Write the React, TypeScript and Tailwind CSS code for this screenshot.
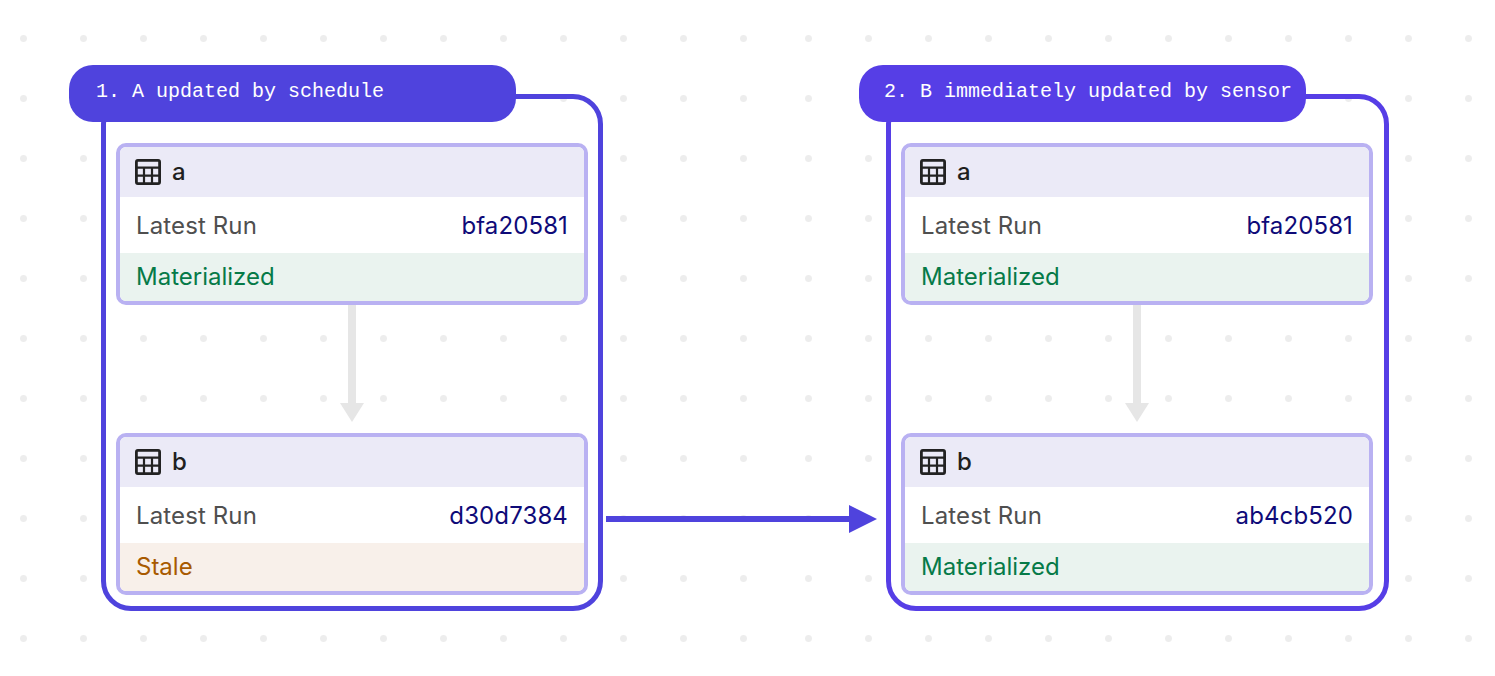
import React from 'react';

const TableIcon = () => (
  <svg width="26" height="26" viewBox="0 0 26 26" fill="none" stroke="#222222" strokeWidth="2.2" className="shrink-0">
    <rect x="1.4" y="1.4" width="23.2" height="23.2" rx="1.5" strokeWidth="2.8" />
    <path d="M1 8.6H25M1 16.6H25M9 8.6V25M17 8.6V25" />
  </svg>
);

interface AssetCardProps {
  name: string;
  run: string;
  stale?: boolean;
}

const AssetCard: React.FC<AssetCardProps> = ({ name, run, stale }) => (
  <div className="h-[162px] border-4 border-[#b9b1f2] rounded-[10px] overflow-hidden flex flex-col font-['Inter',sans-serif] text-[24px] bg-white">
    <div className="h-[50px] bg-[#ebeaf7] flex items-center pl-[15px] gap-[11px] font-medium text-[#1f1f1f]">
      <TableIcon />
      <span>{name}</span>
    </div>
    <div className="h-[56px] pt-px flex items-center justify-between px-4 tracking-[0.005em] text-[#4f4f4f]">
      <span>Latest Run</span>
      <span className="text-[#0e0a78]">{run}</span>
    </div>
    <div className={`flex-1 flex items-center pl-4 ${stale ? 'bg-[#f8f0ea] text-[#a85a00]' : 'bg-[#eaf3ef] text-[#067a48]'}`}>
      {stale ? 'Stale' : 'Materialized'}
    </div>
  </div>
);

const DownArrow = () => (
  <div className="h-[128px] flex justify-center">
    <svg width="24" height="117" viewBox="0 0 24 117">
      <path d="M8 0H16V98H24L12 117L0 98H8Z" fill="#e6e6e6" />
    </svg>
  </div>
);

interface StepPanelProps {
  label: string;
  widthClass: string;
  frameClass: string;
  pillClass: string;
  children: React.ReactNode;
}

const StepPanel: React.FC<StepPanelProps> = ({ label, widthClass, frameClass, pillClass, children }) => (
  <div className={`${widthClass} shrink-0 h-[676px] pt-[94px] pl-[101px] bg-[radial-gradient(circle_at_23.5px_38.5px,#ededed_3px,transparent_4px)] bg-[size:60px_60px]`}>
    <div className={`relative h-[517px] border-[5px] rounded-[30px] ${frameClass}`}>
      <div className={`absolute top-[-34.5px] h-[57.5px] pb-[3px] rounded-[24px] flex items-center font-['Liberation_Mono',monospace] text-[20px] text-white whitespace-pre ${pillClass}`}>
        {label}
      </div>
      <div className="absolute top-[44px] left-[10px] w-[472px]">{children}</div>
    </div>
  </div>
);

export default function App() {
  return (
    <div className="relative w-[1495px] h-[676px] bg-white overflow-hidden flex">
      <StepPanel
        label="1. A updated by schedule"
        widthClass="w-[785px] pr-[182px]"
        frameClass="border-[#4f43dd]"
        pillClass="left-[-37.5px] w-[447.5px] pl-[27.5px] bg-[#4f43dd]"
      >
        <AssetCard name="a" run="bfa20581" />
        <DownArrow />
        <AssetCard name="b" run="d30d7384" stale />
      </StepPanel>
      <StepPanel
        label="2. B immediately updated by sensor"
        widthClass="w-[710px] pr-[106px]"
        frameClass="border-[#563ee6]"
        pillClass="left-[-32.5px] w-[447.5px] pl-[25.5px] bg-[#563ee6]"
      >
        <AssetCard name="a" run="bfa20581" />
        <DownArrow />
        <AssetCard name="b" run="ab4cb520" />
      </StepPanel>
      <svg width="272" height="30" viewBox="0 0 272 30" className="absolute left-[606px] top-[504px]">
        <path d="M0 12H243V1L271 15L243 29V18H0Z" fill="#4f43dd" />
      </svg>
    </div>
  );
}
